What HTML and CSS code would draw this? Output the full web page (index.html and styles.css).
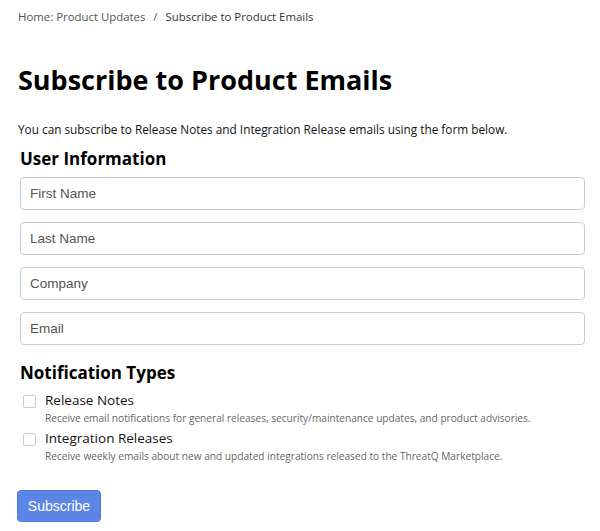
FILE: index.html
```html
<!DOCTYPE html>
<html lang="en">
<head>
    <meta charset="UTF-8">
    <meta name="viewport" content="width=device-width, initial-scale=1.0">
    <title>Subscribe to Product Emails</title>
    <link rel="stylesheet" href="styles.css">
</head>
<body>

<div class="page">
    <div class="breadcrumb">
        <a href="#">Home: Product Updates</a>
        <span class="sep">/</span>
        <span class="current">Subscribe to Product Emails</span>
    </div>

    <h1>Subscribe to Product Emails</h1>
    <p class="intro">You can subscribe to Release Notes and Integration Release emails using the form below.</p>

    <form class="subscribe-form">
        <h3>User Information</h3>
        <div class="fields">
            <input type="text" placeholder="First Name">
            <input type="text" placeholder="Last Name">
            <input type="text" placeholder="Company">
            <input type="email" placeholder="Email">
        </div>

        <h3 class="types-title">Notification Types</h3>
        <div class="option">
            <input type="checkbox" id="releaseNotes">
            <div class="option-text">
                <label for="releaseNotes">Release Notes</label>
                <span class="option-desc">Receive email notifications for general releases, security/maintenance updates, and product advisories.</span>
            </div>
        </div>
        <div class="option">
            <input type="checkbox" id="integrationReleases">
            <div class="option-text">
                <label for="integrationReleases">Integration Releases</label>
                <span class="option-desc">Receive weekly emails about new and updated integrations released to the ThreatQ Marketplace.</span>
            </div>
        </div>

        <button type="button" class="subscribe-button">Subscribe</button>
    </form>
</div>

</body>
</html>
```

FILE: styles.css
```css
* {
    margin: 0;
    padding: 0;
    box-sizing: border-box;
}

body {
    font-family: "Open Sans", sans-serif;
    background-color: #fff;
    color: #111;
}

.page {
    padding: 8px 15px 0 18px;
}

.breadcrumb {
    font-size: 11.4px;
    line-height: 18px;
    color: #333;
}

.breadcrumb a {
    color: #555;
    text-decoration: none;
}

.breadcrumb .sep {
    color: #555;
    margin: 0 5px;
}

h1 {
    font-size: 27px;
    font-weight: 700;
    line-height: 38px;
    margin-top: 35px;
    color: #000;
}

.intro {
    font-size: 11.8px;
    line-height: 18px;
    margin-top: 21px;
    color: #111;
}

.subscribe-form {
    padding-left: 2px;
}

h3 {
    font-size: 17px;
    font-weight: 700;
    line-height: 24px;
    margin-top: 9px;
    color: #000;
}

.fields {
    display: flex;
    flex-direction: column;
    gap: 12px;
    margin-top: 6px;
}

.fields input {
    width: 100%;
    height: 33px;
    border: 1px solid #ccc;
    border-radius: 4px;
    padding: 0 9px;
    font-family: "Liberation Sans", Arial, sans-serif;
    font-size: 13.5px;
    color: #333;
}

.fields input::placeholder {
    color: #555;
}

.types-title {
    margin-top: 16px;
}

.option {
    display: flex;
    align-items: flex-start;
    margin-top: 6px;
}

.option + .option {
    margin-top: 3px;
}

.option input[type="checkbox"] {
    appearance: none;
    width: 13px;
    height: 13px;
    border: 1px solid #ccc;
    border-radius: 2px;
    margin: 4px 0 0 3px;
    background: #fff;
}

.option-text {
    display: flex;
    flex-direction: column;
    padding-left: 9px;
}

.option-text label {
    font-size: 13.5px;
    line-height: 19px;
    color: #111;
}

.option-desc {
    font-size: 10.15px;
    line-height: 16px;
    color: #666;
}

.subscribe-button {
    margin: 26px 0 0 -3px;
    width: 84px;
    height: 32px;
    background-color: #5b86e5;
    border: 1px solid #4f7ad8;
    border-radius: 4px;
    color: #fff;
    font-family: "Liberation Sans", Arial, sans-serif;
    font-size: 14px;
    cursor: pointer;
}
```
